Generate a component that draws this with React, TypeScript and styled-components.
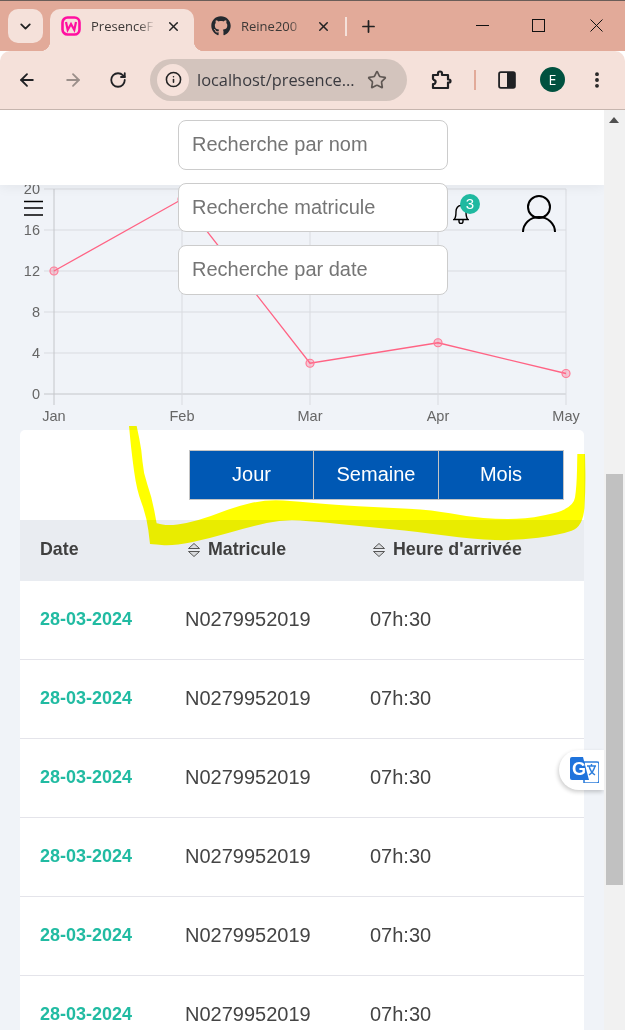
import { createGlobalStyle, styled } from 'styled-components';
import { ArrowLeft, ArrowRight, ChevronDown, Info, MoreVertical, Plus, RotateCw, Star, X } from 'lucide-react';
import { FaGithub } from 'react-icons/fa';

const GlobalStyle = createGlobalStyle`
  html, body {
    margin: 0;
    padding: 0;
    background: #fff;
    overflow: hidden;
  }
  * {
    box-sizing: border-box;
  }
`;

const Window = styled.div`
  width: 625px;
  height: 1030px;
  display: flex;
  flex-direction: column;
  overflow: hidden;
  font-family: 'Liberation Sans', Arial, sans-serif;
`;

/* browser chrome */
const TabStrip = styled.div`
  height: 51px;
  flex: none;
  display: flex;
  align-items: flex-end;
  padding-left: 8px;
  background: #e2aa99;
  border-top: 1px solid #6a5d58;
`;

const TabSearch = styled.div`
  width: 35px;
  height: 34px;
  margin-bottom: 8px;
  margin-right: 7px;
  border-radius: 10px;
  background: #f5e1da;
  display: flex;
  align-items: center;
  justify-content: center;
  color: #222;
`;

const Tab = styled.div<{ $active?: boolean }>`
  width: ${(p) => (p.$active ? '144px' : '150px')};
  height: 42px;
  display: flex;
  align-items: center;
  padding: 0 13px 8px 11px;
  border-radius: 10px 10px 0 0;
  background: ${(p) => (p.$active ? '#f5e1da' : 'transparent')};
  color: #3c3836;
  position: relative;

  ${(p) =>
    p.$active &&
    `
    &::before, &::after {
      content: '';
      position: absolute;
      bottom: 0;
      width: 10px;
      height: 10px;
    }
    &::before {
      left: -10px;
      background: radial-gradient(circle at 0 0, transparent 10px, #f5e1da 10.5px);
    }
    &::after {
      right: -10px;
      background: radial-gradient(circle at 100% 0, transparent 10px, #f5e1da 10.5px);
    }
  `}
`;

const TabTitle = styled.span`
  width: 64px;
  margin-left: 10px;
  margin-right: auto;
  overflow: hidden;
  white-space: nowrap;
  font-family: 'Open Sans', sans-serif;
  font-size: 13px;
  mask-image: linear-gradient(to right, #000 75%, transparent);
`;

const TabDivider = styled.span`
  width: 2px;
  height: 19px;
  margin: 0 12px 15px 1px;
  background: #f5e1da;
`;

const NewTab = styled.div`
  height: 42px;
  padding-bottom: 8px;
  display: flex;
  align-items: center;
  color: #222;
`;

const WindowControls = styled.div`
  margin-left: auto;
  height: 50px;
  padding-right: 22px;
  display: flex;
  align-items: flex-start;
  gap: 43px;
`;

const WinIcon = styled.svg`
  width: 13px;
  height: 13px;
  margin-top: 18px;
  stroke: #111;
  stroke-width: 1;
  fill: none;

  &:last-child {
    margin-left: 2px;
  }
`;

const Toolbar = styled.div`
  height: 59px;
  flex: none;
  display: flex;
  align-items: center;
  padding: 0 0 1px 15px;
  background: #f5e1da;
  border-bottom: 1px solid #c6b5ae;
  border-radius: 10px 10px 0 0;
  color: #222;
`;

const NavIcon = styled.div<{ $off?: boolean }>`
  width: 24px;
  display: flex;
  justify-content: center;
  margin-right: 21.5px;
  color: ${(p) => (p.$off ? '#9b8f8a' : '#202124')};
`;

const Omnibox = styled.div`
  width: 257px;
  height: 42px;
  margin-left: -1.5px;
  padding: 0 20px 0 7px;
  display: flex;
  align-items: center;
  border-radius: 21px;
  background: #d3c4bd;
`;

const InfoBadge = styled.div`
  width: 32px;
  height: 32px;
  border-radius: 50%;
  background: #f5e1da;
  display: flex;
  align-items: center;
  justify-content: center;
  flex: none;
`;

const Url = styled.span`
  margin-left: 8px;
  margin-right: auto;
  font-family: 'Open Sans', sans-serif;
  font-size: 16.4px;
  color: #3a3a3f;
  white-space: nowrap;
`;

const ToolbarRight = styled.div`
  margin-left: 22px;
  display: flex;
  align-items: center;
`;

const ToolbarSep = styled.span`
  width: 2px;
  height: 20px;
  margin: 0 22px 0 21px;
  background: #e2aa99;
`;

const Avatar = styled.div`
  width: 25px;
  height: 25px;
  margin: 0 22px 0 24px;
  border-radius: 50%;
  background: #00513f;
  color: #fff;
  font-family: 'Open Sans', sans-serif;
  font-size: 14px;
  display: flex;
  align-items: center;
  justify-content: center;
`;

/* page */
const Viewport = styled.div`
  flex: 1;
  min-height: 0;
  display: flex;
`;

const Page = styled.div`
  width: 604px;
  position: relative;
  overflow: hidden;
  background: #f0f3f8;
`;

const TopBar = styled.div`
  height: 75px;
  background: #fff;
  box-shadow: 0 2px 12px rgba(0, 0, 0, 0.06);
  position: relative;
  z-index: 1;
`;

const SearchStack = styled.div`
  position: absolute;
  top: 10px;
  left: 178px;
  width: 270px;
  display: flex;
  flex-direction: column;
  gap: 13px;
  z-index: 3;
`;

const SearchInput = styled.input`
  width: 100%;
  height: 49.6px;
  padding: 0 13px;
  border: 1px solid #ccc;
  border-radius: 8px;
  background: #fff;
  font-family: inherit;
  font-size: 20px;
  outline: none;

  &::placeholder {
    color: #757575;
    opacity: 1;
  }
`;

const Burger = styled.svg`
  position: absolute;
  top: 90px;
  left: 23px;
  z-index: 2;
`;

const BellWrap = styled.div`
  position: absolute;
  top: 94px;
  left: 453px;
  width: 16px;
  height: 20px;
  z-index: 2;
`;

const Badge = styled.span`
  position: absolute;
  top: -10px;
  left: 7px;
  width: 20px;
  height: 20px;
  border-radius: 50%;
  background: #20b9a0;
  color: #fff;
  font-size: 15px;
  line-height: 19px;
  text-align: center;
`;

const UserIcon = styled.svg`
  position: absolute;
  top: 84px;
  left: 521px;
  z-index: 2;
`;

const ChartBox = styled.div`
  height: 255px;
  margin-top: -10px;
`;

const AxisLabel = styled.text`
  font-family: 'Liberation Sans', Arial, sans-serif;
  font-size: 14.5px;
  fill: #666;
`;

const Card = styled.div`
  margin: 0 20px;
  border-radius: 5px 5px 0 0;
  background: #fff;
`;

const PeriodBar = styled.div`
  height: 90px;
  padding: 20px 20px 0 0;
  display: flex;
  justify-content: flex-end;
`;

const PeriodButton = styled.div`
  width: 125px;
  height: 50px;
  padding-bottom: 2px;
  display: flex;
  align-items: center;
  justify-content: center;
  background: #0058b4;
  border: 1px solid #c4c4c4;
  color: #fff;
  font-size: 20px;

  & + & {
    border-left: none;
  }
`;

const TableGrid = styled.div`
  display: grid;
  grid-template-columns: 145px 185px 1fr;
  align-items: center;
`;

const HeadRow = styled(TableGrid)`
  height: 61px;
  padding-bottom: 2px;
  background: #e9ecf1;
  color: #3f3f3f;
  font-size: 17.8px;
  font-weight: 700;
`;

const HeadCell = styled.div`
  padding-left: 20px;
  display: flex;
  align-items: center;
`;

const SortIcon = styled.svg`
  margin: 0 8px 0 3px;
  flex: none;
`;

const BodyRow = styled(TableGrid)`
  height: 79px;
  padding-bottom: 2px;
  border-bottom: 1px solid #e4e4ea;
  color: #444;
  font-size: 20px;
`;

const BodyCell = styled.div`
  padding-left: 20px;
`;

const DateCell = styled(BodyCell)`
  color: #21bba2;
  font-size: 18px;
  font-weight: 700;
`;

const TranslatePill = styled.div`
  position: absolute;
  top: 640px;
  right: 0;
  width: 45px;
  height: 40px;
  padding-left: 11px;
  display: flex;
  align-items: center;
  border-radius: 20px 0 0 20px;
  background: #fff;
  box-shadow: -1px 2px 4px rgba(0, 0, 0, 0.2);
  z-index: 3;
`;

const TranslateLetter = styled.text`
  font-family: 'Liberation Sans', Arial, sans-serif;
  font-size: 18px;
  font-weight: 700;
  fill: #fff;
`;

const Highlighter = styled.svg`
  position: absolute;
  top: 310px;
  left: 100px;
  mix-blend-mode: multiply;
  z-index: 4;
  pointer-events: none;
`;

const Scrollbar = styled.div`
  width: 21px;
  position: relative;
  background: #f1f1f1;
`;

const ScrollArrow = styled.div`
  position: absolute;
  top: 7px;
  left: 5px;
  border-left: 5px solid transparent;
  border-right: 5px solid transparent;
  border-bottom: 6px solid #505050;
`;

const ScrollThumb = styled.div`
  position: absolute;
  top: 364px;
  left: 2px;
  right: 2px;
  height: 411px;
  background: #c1c1c1;
`;

const xs = [54, 182, 310, 438, 566];
const months = ['Jan', 'Feb', 'Mar', 'Apr', 'May'];
const values = [12, 19, 3, 5, 2];
const ticks = [0, 4, 8, 12, 16, 20];
const yOf = (v: number) => 219 - v * 10.25;

// outline of the marker stroke, traced from the screenshot; doubled points stay sharp corners
const markerOutline = [
  [87, 18], [87, 18], [110, 18], [110, 18], [125, 90], [130, 160], [155, 230], [170, 310], [170, 310], [205, 317], [260, 310],
  [330, 290], [400, 262], [500, 238], [600, 245], [700, 255], [850, 262], [1000, 270], [1100, 290],
  [1200, 298], [1300, 295], [1420, 265], [1430, 200], [1432, 102], [1432, 102], [1455, 102], [1455, 102], [1457, 200], [1450, 320],
  [1380, 345], [1250, 362], [1120, 358], [950, 335], [800, 320], [650, 305], [550, 298], [450, 320],
  [330, 355], [220, 378], [150, 372], [150, 372], [140, 290], [110, 210], [95, 100],
];

function smoothPath(pts: number[][]) {
  const mid = (a: number[], b: number[]) => [(a[0] + b[0]) / 2, (a[1] + b[1]) / 2];
  const start = mid(pts[pts.length - 1], pts[0]);
  let d = `M${start[0]} ${start[1]}`;
  pts.forEach((p, i) => {
    const m = mid(p, pts[(i + 1) % pts.length]);
    d += `Q${p[0]} ${p[1]} ${m[0]} ${m[1]}`;
  });
  return d + 'Z';
}

function Chart() {
  return (
    <ChartBox>
      <svg width="604" height="255" viewBox="0 0 604 255">
        {ticks.map((t) => (
          <g key={t}>
            <line x1="44" x2="566" y1={yOf(t)} y2={yOf(t)} stroke={t === 0 ? '#c4c6ca' : '#d9dbe0'} />
            <AxisLabel x="40" y={yOf(t) + 5} textAnchor="end">{t}</AxisLabel>
          </g>
        ))}
        {xs.map((x, i) => (
          <g key={x}>
            <line x1={x} x2={x} y1="14" y2="230" stroke={i === 0 ? '#c4c6ca' : '#d9dbe0'} />
            <AxisLabel x={x} y="246" textAnchor="middle">{months[i]}</AxisLabel>
          </g>
        ))}
        <polyline
          fill="none"
          stroke="#ff6384"
          strokeWidth="1.3"
          points={xs.map((x, i) => `${x},${yOf(values[i])}`).join(' ')}
        />
        {xs.map((x, i) => (
          <circle key={x} cx={x} cy={yOf(values[i])} r="4" fill="rgba(255,99,132,0.3)" stroke="#ff7a96" strokeWidth="1.2" />
        ))}
      </svg>
    </ChartBox>
  );
}

function SortArrows() {
  return (
    <SortIcon width="12" height="14" viewBox="0 0 12 14" fill="#d8dadd" stroke="#555">
      <path d="M.5 5.500L6 .5l5.500 5z" />
      <path d="M.5 8.500L6 13.500l5.500-5z" />
    </SortIcon>
  );
}

export default function App() {
  const rows = Array.from({ length: 6 }, (_, i) => i);

  return (
    <Window>
      <GlobalStyle />
      <TabStrip>
        <TabSearch><ChevronDown size={17} strokeWidth={2.6} /></TabSearch>
        <Tab $active>
          <svg width="20" height="20" viewBox="0 0 20 20">
            <rect x="1.5" y="1.5" width="17" height="17" rx="5" fill="none" stroke="#ff0fa0" strokeWidth="2.6" />
            <path d="M5 6l1.7 8 3.3-6 3.3 6L15 6" fill="none" stroke="#ff0fa0" strokeWidth="2.2" />
          </svg>
          <TabTitle>PresenceF</TabTitle>
          <X size={15} strokeWidth={2.4} color="#222" />
        </Tab>
        <Tab>
          <FaGithub size={20} color="#24292f" style={{ marginLeft: 6 }} />
          <TabTitle>Reine200</TabTitle>
          <X size={15} strokeWidth={2.4} color="#222" />
        </Tab>
        <TabDivider />
        <NewTab><Plus size={19} strokeWidth={2.2} /></NewTab>
        <WindowControls>
          <WinIcon viewBox="0 0 13 13"><path d="M0 6.500h13" /></WinIcon>
          <WinIcon viewBox="0 0 13 13"><rect x=".5" y=".5" width="12" height="12" /></WinIcon>
          <WinIcon viewBox="0 0 13 13"><path d="M.5.5l12 12M12.500.5l-12 12" /></WinIcon>
        </WindowControls>
      </TabStrip>

      <Toolbar>
        <NavIcon><ArrowLeft size={20} strokeWidth={2.2} /></NavIcon>
        <NavIcon $off><ArrowRight size={20} strokeWidth={2.2} /></NavIcon>
        <NavIcon><RotateCw size={18} strokeWidth={2.4} /></NavIcon>
        <Omnibox>
          <InfoBadge><Info size={17} strokeWidth={2.2} /></InfoBadge>
          <Url>localhost/presence...</Url>
          <Star size={20} strokeWidth={2} color="#5f5753" />
        </Omnibox>
        <ToolbarRight>
          <svg width="24" height="24" viewBox="0 0 24 24" fill="none" stroke="#202124" strokeWidth="2.2" strokeLinejoin="round">
            <path d="M4 7h5V5.500a2 2 0 0 1 4 0V7h6v4.500h1a1.500 1.500 0 0 1 0 3h-1V20H4v-4a2 2 0 0 0 1-4 2 2 0 0 0-1-1z" />
          </svg>
          <ToolbarSep />
          <svg width="18" height="18" viewBox="0 0 20 20">
            <rect x="1.2" y="1.2" width="17.6" height="17.6" rx="2" fill="none" stroke="#202124" strokeWidth="2" />
            <rect x="10" y="1.2" width="8.8" height="17.6" fill="#202124" />
          </svg>
          <Avatar>E</Avatar>
          <MoreVertical size={20} strokeWidth={2.6} />
        </ToolbarRight>
      </Toolbar>

      <Viewport>
        <Page>
          <TopBar />
          <SearchStack>
            <SearchInput placeholder="Recherche par nom" />
            <SearchInput placeholder="Recherche matricule" />
            <SearchInput placeholder="Recherche par date" />
          </SearchStack>

          <Burger width="20" height="18" viewBox="0 0 20 18" stroke="#000" strokeWidth="1.5">
            <path d="M1 1.500h19M1 8h19M1 15h19" />
          </Burger>
          <BellWrap>
            <svg width="16" height="20" viewBox="0 0 16 20" fill="none" stroke="#000" strokeWidth="1.4">
              <path d="M1 15.500h14c-1.500-1-2-3-2-8 0-3.500-2-6-5-6s-5 2.500-5 6c0 5-.5 7-2 8z" />
              <path d="M6 15.500v2a2 2 0 0 0 4 0v-2" />
            </svg>
            <Badge>3</Badge>
          </BellWrap>
          <UserIcon width="36" height="40" viewBox="0 0 36 40" fill="none" stroke="#000" strokeWidth="2">
            <circle cx="18" cy="13" r="11" />
            <path d="M2 38c0-8 7-15 16-15s16 7 16 15" />
          </UserIcon>

          <Chart />

          <Card>
            <PeriodBar>
              <PeriodButton>Jour</PeriodButton>
              <PeriodButton>Semaine</PeriodButton>
              <PeriodButton>Mois</PeriodButton>
            </PeriodBar>
            <HeadRow>
              <HeadCell>Date</HeadCell>
              <HeadCell><SortArrows />Matricule</HeadCell>
              <HeadCell><SortArrows />Heure d'arrivée</HeadCell>
            </HeadRow>
            {rows.map((r) => (
              <BodyRow key={r}>
                <DateCell>28-03-2024</DateCell>
                <BodyCell>N0279952019</BodyCell>
                <BodyCell>07h:30</BodyCell>
              </BodyRow>
            ))}
          </Card>

          <TranslatePill>
            <svg width="29" height="26" viewBox="0 0 29 26">
              <path d="M14 5h13a2 2 0 0 1 2 2v17a2 2 0 0 1-2 2H14z" fill="#fff" stroke="#2f7fdc" strokeWidth="1.6" />
              <path d="M2 0h11l6 23H2a2 2 0 0 1-2-2V2a2 2 0 0 1 2-2z" fill="#1f73dc" />
              <TranslateLetter x="2" y="18">G</TranslateLetter>
              <path d="M17 9h9M21.500 7v2M19 9c1 4 3 7 6 9M25 9c-1 4-3 7-6 9" fill="none" stroke="#2f7fdc" strokeWidth="1.4" />
            </svg>
          </TranslatePill>

          <Highlighter width="500" height="170" viewBox="0 0 1500 510">
            <path d={smoothPath(markerOutline)} fill="#ffff00" />
          </Highlighter>
        </Page>

        <Scrollbar>
          <ScrollArrow />
          <ScrollThumb />
        </Scrollbar>
      </Viewport>
    </Window>
  );
}
